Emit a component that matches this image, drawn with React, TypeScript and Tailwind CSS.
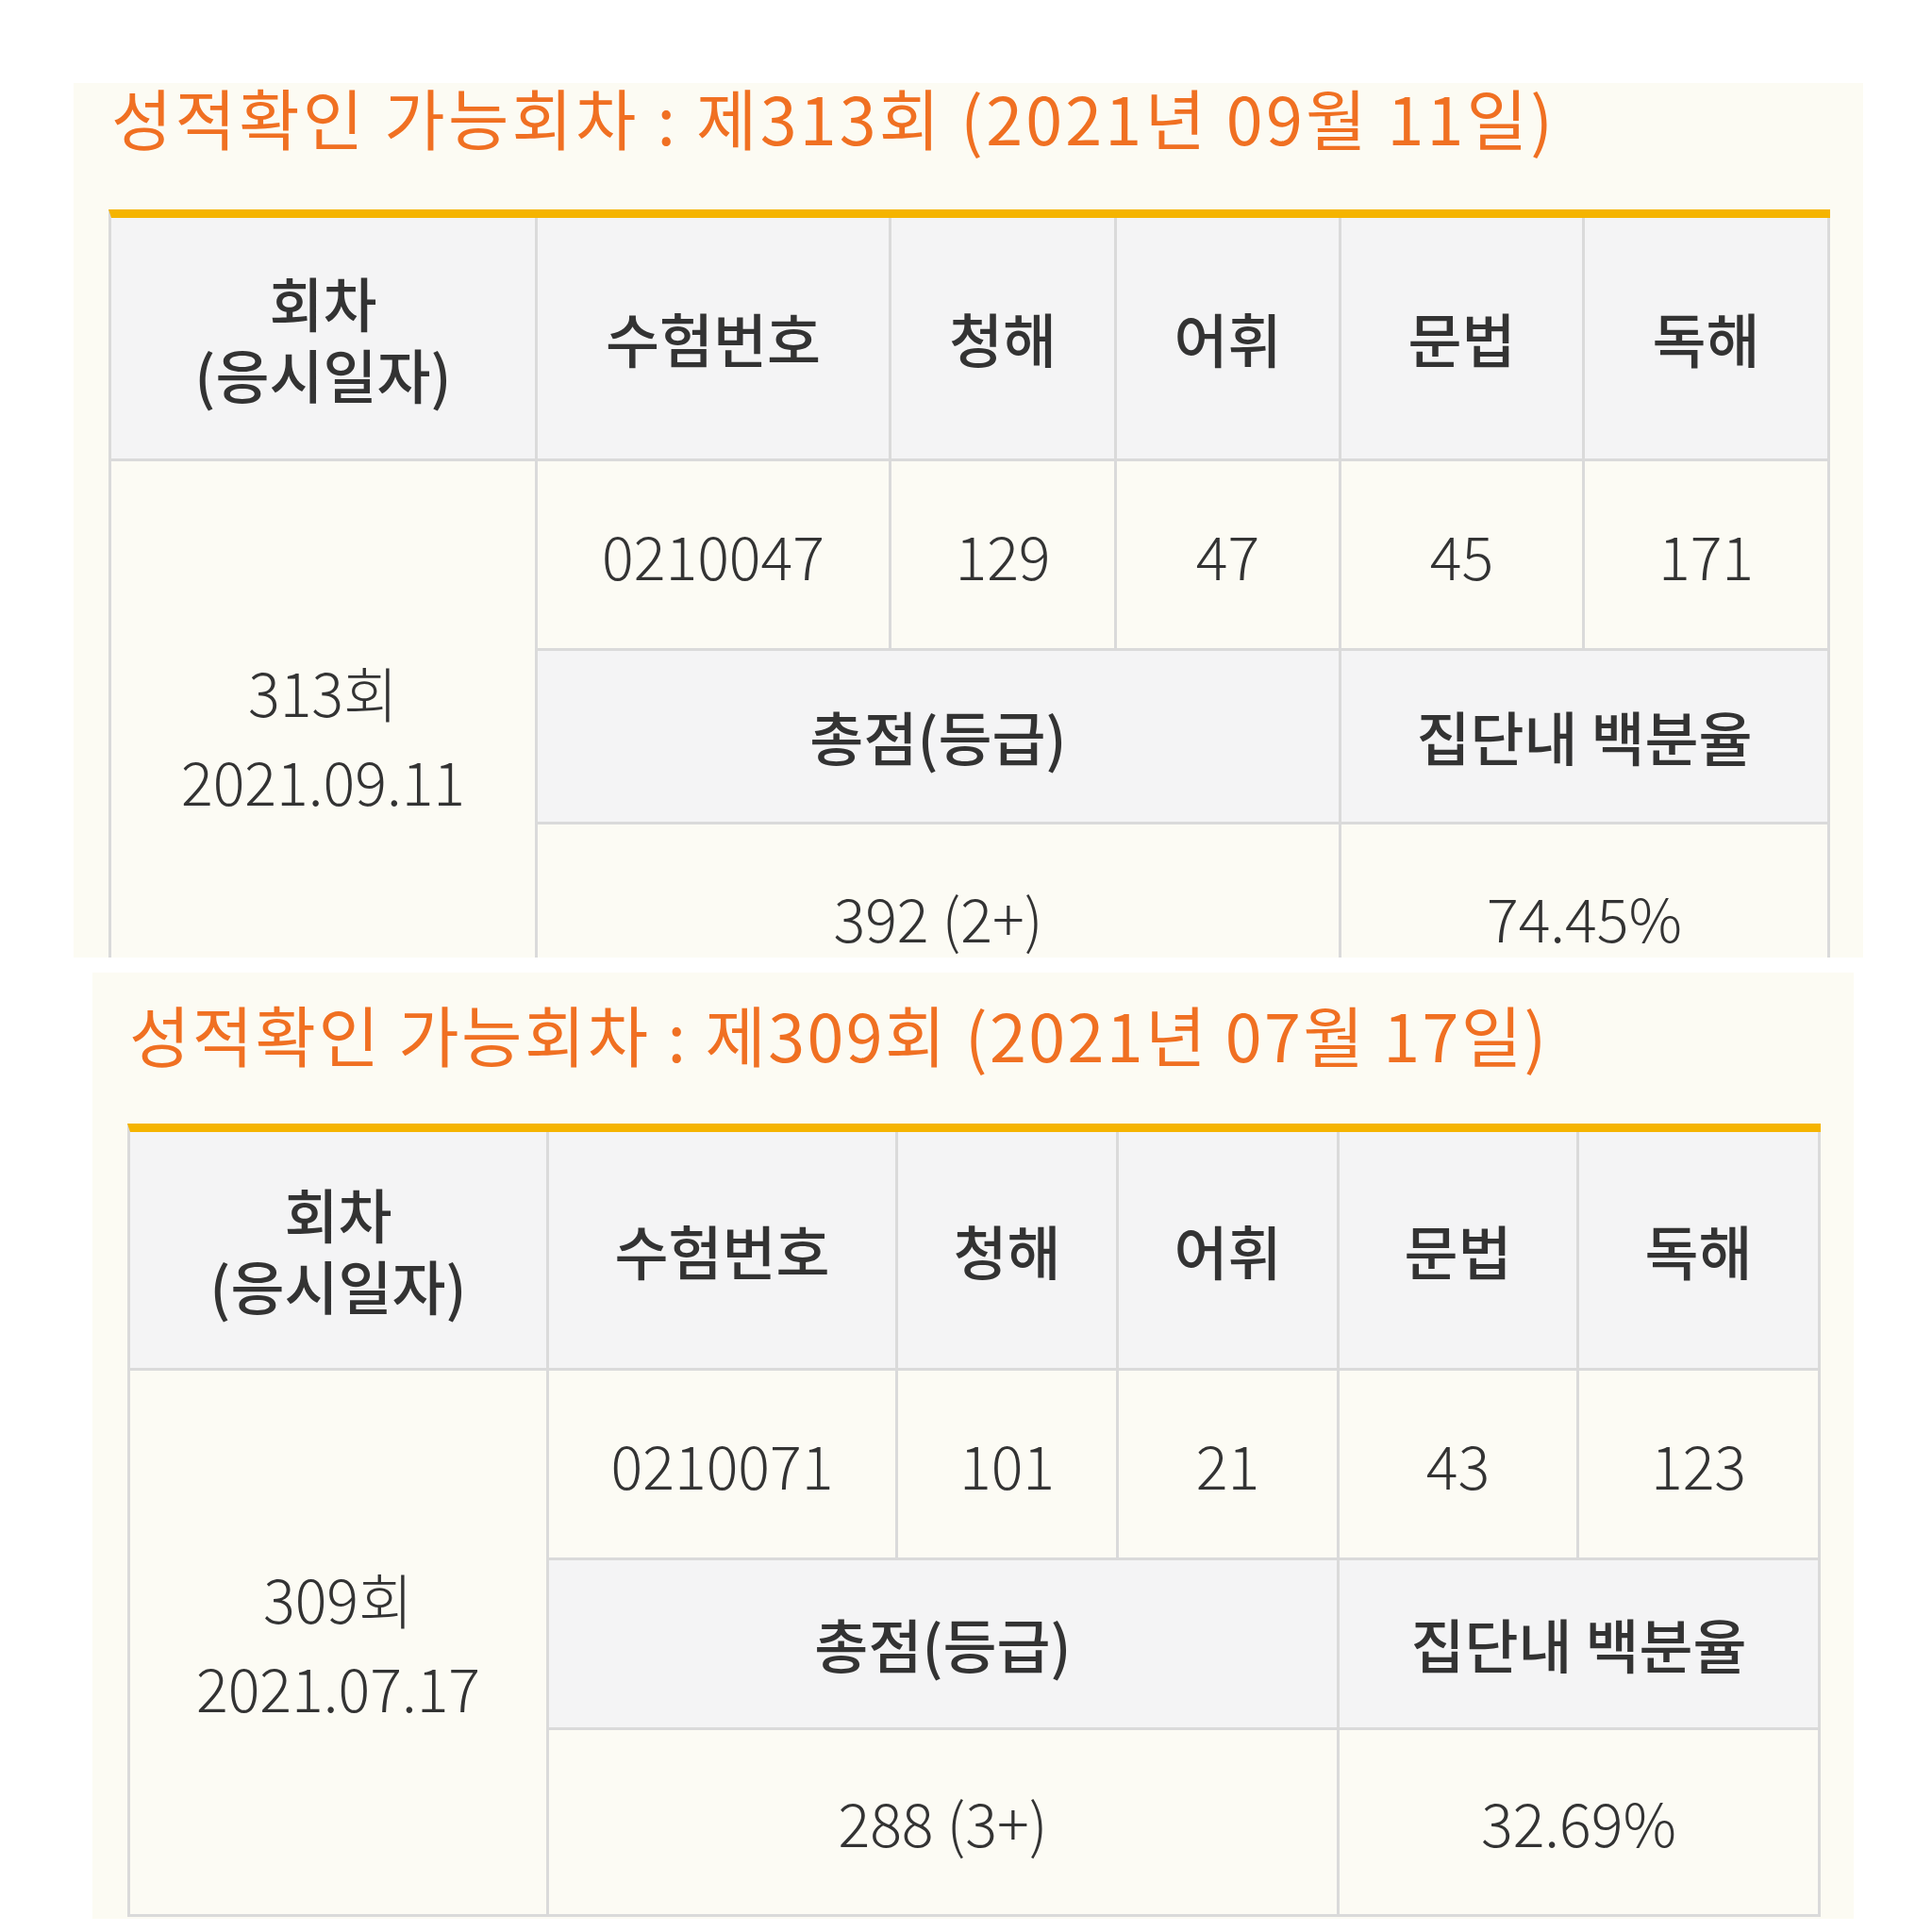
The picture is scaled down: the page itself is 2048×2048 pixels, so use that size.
import React from "react";

type Data = {
  title: string;
  round: string;
  date: string;
  no: string;
  scores: string[];
  total: string;
  pct: string;
};

const font = { fontFamily: '"Noto Sans CJK KR", "Noto Sans", sans-serif' };

function Cell({ className = "", children }: { className?: string; children?: React.ReactNode }) {
  return (
    <div
      className={
        "flex items-center justify-center text-center border-r-[3px] border-b-[3px] border-[#dadada] " +
        className
      }
    >
      {children}
    </div>
  );
}

function ScoreTable({ d, cols, rows }: { d: Data; cols: string; rows: string }) {
  const head = "bg-[#f4f4f5] text-[62px] font-medium text-[#333333]";
  const body = "bg-[#fcfbf4] text-[63px] font-light text-[#333333]";
  return (
    <div className="border-t-[9px] border-t-[#f5b400] border-l-[3px] border-l-[#dadada]">
      <div className={"grid " + cols + " " + rows}>
        <Cell className={head + " flex-col leading-[1.22]"}>
          <span>회차</span>
          <span>(응시일자)</span>
        </Cell>
        <Cell className={head}>수험번호</Cell>
        <Cell className={head}>청해</Cell>
        <Cell className={head}>어휘</Cell>
        <Cell className={head}>문법</Cell>
        <Cell className={head}>독해</Cell>

        <Cell className={body + " row-span-3 flex-col leading-[1.5]"}>
          <span>{d.round}</span>
          <span>{d.date}</span>
        </Cell>
        <Cell className={body}>{d.no}</Cell>
        {d.scores.map((s, i) => (
          <Cell key={i} className={body}>
            {s}
          </Cell>
        ))}

        <Cell className={head + " col-span-3"}>총점(등급)</Cell>
        <Cell className={head + " col-span-2"}>집단내 백분율</Cell>

        <Cell className={body + " col-span-3"}>{d.total}</Cell>
        <Cell className={body + " col-span-2"}>{d.pct}</Cell>
      </div>
    </div>
  );
}

export default function App() {
  const d1: Data = {
    title: "성적확인 가능회차 : 제313회 (2021년 09월 11일)",
    round: "313회",
    date: "2021.09.11",
    no: "0210047",
    scores: ["129", "47", "45", "171"],
    total: "392 (2+)",
    pct: "74.45%",
  };
  const d2: Data = {
    title: "성적확인 가능회차 : 제309회 (2021년 07월 17일)",
    round: "309회",
    date: "2021.07.17",
    no: "0210071",
    scores: ["101", "21", "43", "123"],
    total: "288 (3+)",
    pct: "32.69%",
  };

  return (
    <div className="w-[2048px] h-[2048px] bg-white overflow-hidden pt-[88px]" style={font}>
      <div className="ml-[78px] w-[1897px] h-[927px] overflow-hidden bg-[#fcfbf3]">
        <div className="pl-[40px] h-[72px] leading-[72px] text-[70px] tracking-[3.2px] text-[#f07022] font-normal whitespace-nowrap">
          {d1.title}
        </div>
        <div className="mt-[62px] ml-[37px] w-[1825px]">
          <ScoreTable
            d={d1}
            cols="grid-cols-[452px_375px_239px_238px_258px_260px]"
            rows="grid-rows-[258px_201px_184px_200px]"
          />
        </div>
      </div>

      <div className="mt-[16px] ml-[98px] w-[1867px] h-[1003px] overflow-hidden bg-[#fcfbf3]">
        <div className="pt-[23px] pl-[39px] h-[107px] leading-[84px] text-[70px] tracking-[2.4px] text-[#f07022] font-normal whitespace-nowrap">
          {d2.title}
        </div>
        <div className="mt-[53px] ml-[37px] w-[1795px]">
          <ScoreTable
            d={d2}
            cols="grid-cols-[444px_370px_234px_234px_254px_256px]"
            rows="grid-rows-[253px_201px_180px_198px]"
          />
        </div>
      </div>
    </div>
  );
}
